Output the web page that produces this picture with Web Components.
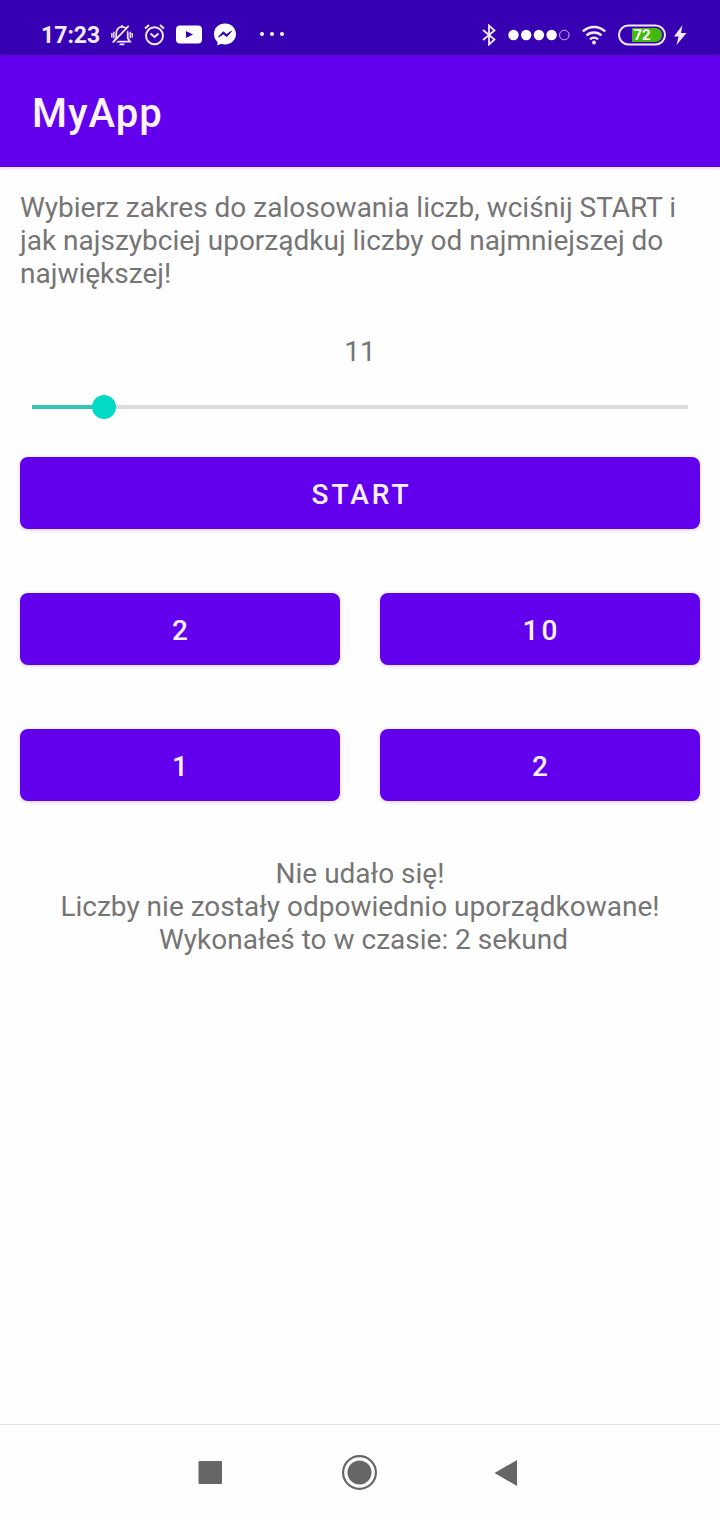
<!DOCTYPE html>
<html lang="pl">
<head>
<meta charset="utf-8">
<meta name="viewport" content="width=device-width, initial-scale=1">
<title>MyApp</title>
<style>
  body { margin: 0; background: #fefefe; font-family: Roboto, "Noto Sans", sans-serif; color: #757575; }
</style>
</head>
<body>
<my-app></my-app>

<script>
const define = (name, html, setup) => {
  const template = document.createElement('template');
  template.innerHTML = html;
  customElements.define(name, class extends HTMLElement {
    constructor() {
      super();
      this.attachShadow({ mode: 'open' }).append(template.content.cloneNode(true));
    }
    connectedCallback() { if (setup) setup(this, this.shadowRoot); }
  });
};

define('status-bar', `
<style>
  :host { display: flex; justify-content: space-between; align-items: center; box-sizing: border-box; height: 55px; padding: 14px 33px 0 41px; background: #3700b3; color: #f3e9ff; }
  .group { display: flex; align-items: center; gap: 11px; }
  .system { gap: 12px; }
  .power { display: flex; align-items: center; gap: 7px; }
  time { padding-top: 2px; font-size: 23px; line-height: 28px; font-weight: 700; }
  svg { display: block; flex: none; }
  .more { margin-left: 11px; }
  .battery { position: relative; width: 48px; height: 22px; }
  .battery span { position: absolute; inset: 0; text-align: center; font-size: 15px; line-height: 22px; font-weight: 700; color: #fff; }
</style>
<div class="group">
  <time>17:23</time>
  <svg width="22" height="24" viewBox="0 0 23 24" fill="none" stroke="currentColor" stroke-width="1.800" aria-hidden="true">
    <path d="M5.500 15.500V10C5.500 6 8 3.500 11.500 3.500S17.500 6 17.500 10V15.500L20 19H3Z"/>
    <path d="M9 21.800H14M11.500 1.500V4"/>
    <path d="M3 8.500V15.500M.9 10V14.500M20.100 8.500V15.500M22.200 10V14.500" stroke-width="1.500"/>
    <path d="M3.500 20.500L19.500 4" stroke="#3700b3" stroke-width="2"/>
    <path d="M2 19.800L18.500 2.500"/>
  </svg>
  <svg width="21" height="24" viewBox="0 0 21 24" fill="none" stroke="currentColor" stroke-width="2" aria-hidden="true">
    <circle cx="10.500" cy="12.800" r="8.500"/><path d="M6.500 10.500L10.500 14L14.500 10.500M1 5.500L5 2M16 2L20 5.500"/>
  </svg>
  <svg width="26" height="20" viewBox="0 0 26 20" aria-hidden="true">
    <rect y=".5" width="26" height="18" rx="4" fill="#fff"/><path d="M10 6L17 9.500L10 13Z" fill="#3700b3"/>
  </svg>
  <svg width="24" height="24" viewBox="0 0 24 24" aria-hidden="true">
    <path d="M12 .5C5.600 .5 1 5.100 1 11C1 14.300 2.300 17 4.500 19V22.500L8 20.800C9.300 21.200 10.600 21.400 12 21.400C18.400 21.400 23 16.800 23 11S18.400 .5 12 .5Z" fill="#fff"/>
    <path d="M5.500 14L10.300 8.800L13.500 11.500L18.500 8.300L13.700 13.700L10.500 11Z" fill="#3700b3" stroke="#3700b3"/>
  </svg>
  <svg class="more" width="26" height="6" viewBox="0 0 26 6" fill="#fff" aria-hidden="true">
    <circle cx="3" cy="2" r="2"/><circle cx="13" cy="2" r="2"/><circle cx="23" cy="2" r="2"/>
  </svg>
</div>
<div class="group system">
  <svg width="14" height="22" viewBox="0 0 14 22" fill="none" stroke="currentColor" stroke-width="1.800" aria-hidden="true">
    <path d="M1 6L12.500 15.500L7 20.500V1.500L12.500 6.500L1 16"/>
  </svg>
  <svg width="62" height="12" viewBox="0 0 62 12" fill="#fff" aria-hidden="true">
    <circle cx="5.500" cy="6" r="5.200"/><circle cx="18.200" cy="6" r="5.200"/><circle cx="30.900" cy="6" r="5.200"/><circle cx="43.600" cy="6" r="5.200"/>
    <circle cx="56.300" cy="6" r="4.800" fill="none" stroke="#cbb8f0"/>
  </svg>
  <svg width="24" height="20" viewBox="0 0 24 20" fill="none" stroke="currentColor" stroke-width="2.400" aria-hidden="true">
    <path d="M.8 6.500C7 .4 17 .4 23.200 6.500M4.500 10.500C8.700 6.500 15.300 6.500 19.500 10.500M8 14.300C10.300 12.200 13.700 12.200 16 14.300"/>
    <circle cx="12" cy="17.500" r="2" fill="currentColor" stroke="none"/>
  </svg>
  <div class="power">
    <div class="battery">
      <svg width="48" height="22" viewBox="0 0 48 22" aria-hidden="true">
        <rect x="1" y="1.500" width="46" height="19" rx="9.500" fill="none" stroke="currentColor" stroke-width="2"/>
        <path d="M14 4H37C46.500 4 46.500 18 37 18H14Z" fill="#43b80f"/>
      </svg>
      <span>72</span>
    </div>
    <svg width="14" height="20" viewBox="0 0 14 20" fill="currentColor" aria-hidden="true">
      <path d="M9.500 0L1 11.500H5.500L3.500 20L13.500 8H8Z"/>
    </svg>
  </div>
</div>`);

define('app-bar', `
<style>
  :host { display: flex; align-items: center; height: 112px; padding: 0 32px; background: #6200ee; box-shadow: 0 1px 4px rgba(60, 0, 120, .2); }
  h1 { margin: 0; padding-top: 6px; font-size: 40px; line-height: 48px; font-weight: 500; letter-spacing: 1px; color: #fdf3ff; }
</style>
<h1><slot></slot></h1>`);

define('range-field', `
<style>
  :host { display: block; }
  output { display: block; text-align: center; font-size: 28px; line-height: 33px; }
  input { display: block; appearance: none; -webkit-appearance: none; box-sizing: border-box; width: 100%; height: 24px; margin: 27px 0 0; background: none; }
  input::-webkit-slider-runnable-track { height: 24px;
    background:
      linear-gradient(#35c4b6, #35c4b6) 12px 10px / calc((100% - 24px) * var(--part)) 4px no-repeat,
      linear-gradient(#dadada, #dadada) center / calc(100% - 24px) 4px no-repeat; }
  input::-webkit-slider-thumb { -webkit-appearance: none; width: 24px; height: 24px; border-radius: 50%; background: #03dac5; }
</style>
<output for="range">11</output>
<input id="range" type="range" min="0" max="100" value="11" aria-label="Zakres">`,
(host, root) => {
  const input = root.querySelector('input');
  const update = () => {
    input.style.setProperty('--part', input.value / 100);
    root.querySelector('output').textContent = input.value;
  };
  input.addEventListener('input', update);
  update();
});

define('app-button', `
<style>
  :host { display: block; }
  /* The left padding balances the tracking after the last letter. */
  button { display: block; width: 100%; height: 72px; padding: 2px 0 0 3px; border: 0; border-radius: 8px; background: #6200ee; color: #fdf0ff; font: 500 28px/33px Roboto, "Noto Sans", sans-serif; letter-spacing: 3px; box-shadow: 0 1px 4px rgba(70, 0, 130, .2); cursor: pointer; }
</style>
<button type="button"><slot></slot></button>`);

define('nav-bar', `
<style>
  :host { display: flex; justify-content: center; align-items: center; gap: 100px; height: 95px; border-top: 1px solid #e2e2e2; }
  button { display: grid; place-items: center; width: 48px; height: 48px; padding: 0; border: 0; background: none; color: #666; }
  svg { display: block; }
</style>
<button type="button" aria-label="Ostatnie"><svg width="36" height="36" viewBox="0 0 36 36"><rect x="4.500" y="6" width="23.500" height="23" rx="1" fill="currentColor"/></svg></button>
<button type="button" aria-label="Ekran główny"><svg width="36" height="36" viewBox="0 0 36 36"><circle cx="17.500" cy="17.500" r="16.400" fill="none" stroke="currentColor" stroke-width="2.200"/><circle cx="17.500" cy="17.500" r="12" fill="currentColor"/></svg></button>
<button type="button" aria-label="Wstecz"><svg width="36" height="36" viewBox="0 0 36 36"><path d="M27 5V31L4.500 18Z" fill="currentColor"/></svg></button>`);

define('my-app', `
<style>
  :host { display: flex; flex-direction: column; min-height: 100vh; }
  main { flex: 1; padding: 24px 20px; }
  p { margin: 0; font-size: 28px; line-height: 33px; }
  range-field { margin-top: 45px; }
  .start { margin-top: 38px; }
  .numbers { display: grid; grid-template-columns: 1fr 1fr; gap: 64px 40px; margin-top: 64px; }
  .result { margin-top: 56px; text-align: center; }
</style>
<status-bar></status-bar>
<app-bar>MyApp</app-bar>
<main>
  <p>Wybierz zakres do zalosowania liczb, wciśnij START i jak najszybciej uporządkuj liczby od najmniejszej do największej!</p>
  <range-field></range-field>
  <app-button class="start">START</app-button>
  <div class="numbers">
    <app-button>2</app-button>
    <app-button>10</app-button>
    <app-button>1</app-button>
    <app-button>2</app-button>
  </div>
  <p class="result">Nie udało się!<br>Liczby nie zostały odpowiednio uporządkowane!<br>&nbsp;Wykonałeś to w czasie: 2 sekund</p>
</main>
<nav-bar></nav-bar>`);
</script>
</body>
</html>
